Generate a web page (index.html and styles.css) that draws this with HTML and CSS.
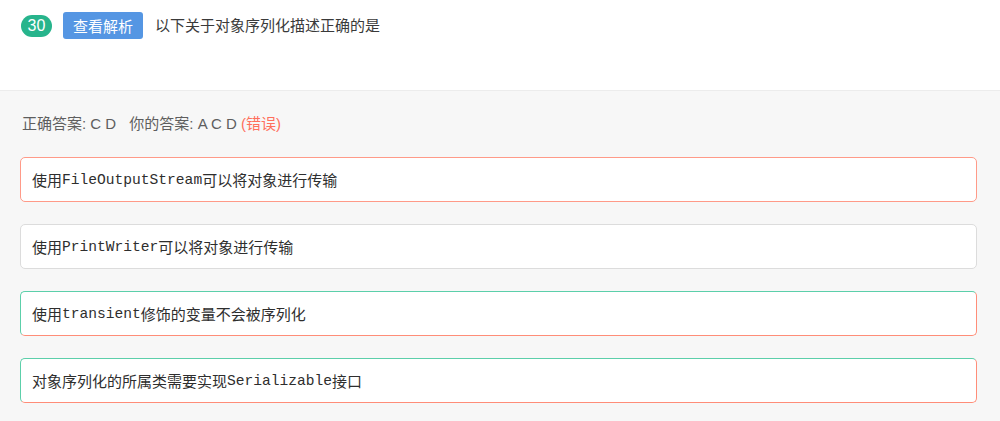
FILE: index.html
```html
<!DOCTYPE html>
<html lang="zh-CN">
<head>
<meta charset="utf-8">
<title>Quiz</title>
<link rel="stylesheet" href="styles.css">
</head>
<body>
<div class="head">
  <span class="num">30</span>
  <span class="btn">查看解析</span>
  <span class="question">以下关于对象序列化描述正确的是</span>
</div>
<div class="body">
  <div class="answer">
    <span>正确答案: C D</span>
    <span class="mine">你的答案: A C D <span class="wrong">(错误)</span></span>
  </div>
  <div class="opt opt-wrong">使用<code>FileOutputStream</code>可以将对象进行传输</div>
  <div class="opt">使用<code>PrintWriter</code>可以将对象进行传输</div>
  <div class="opt opt-right">使用<code>transient</code>修饰的变量不会被序列化</div>
  <div class="opt opt-right">对象序列化的所属类需要实现<code>Serializable</code>接口</div>
</div>
</body>
</html>
```
FILE: styles.css
```css
html, body {
  margin: 0;
  padding: 0;
}
body {
  font-family: "Liberation Sans", "Noto Sans CJK SC", sans-serif;
  font-size: 15px;
  color: #2e2e2e;
  background: #f7f7f7;
  height: 421px;
  overflow: hidden;
}
.head {
  background: #fff;
  height: 91px;
  border-bottom: 1px solid #ececec;
  box-sizing: border-box;
  display: flex;
  align-items: flex-start;
  padding: 12px 20px 0 21px;
}
.num {
  margin-top: 3px;
  width: 31px;
  height: 22px;
  border-radius: 11px;
  background: #27b48c;
  color: #fff;
  display: flex;
  align-items: center;
  justify-content: center;
  font-size: 16px;
}
.btn {
  margin-left: 11px;
  width: 80px;
  height: 27px;
  border-radius: 3px;
  background: #5596e3;
  color: #fff;
  display: flex;
  align-items: center;
  justify-content: center;
  font-size: 15px;
}
.question {
  margin-left: 12px;
  line-height: 27px;
  color: #3a3a3a;
}
.body {
  padding: 0 23px 0 20px;
}
.answer {
  padding-top: 23px;
  line-height: 20px;
  color: #5e5e5e;
  padding-left: 2px;
  margin-bottom: 23px;
}
.mine {
  margin-left: 9px;
}
.wrong {
  color: #ff6f5c;
}
.opt {
  height: 45px;
  box-sizing: border-box;
  border: 1px solid #dcdcdc;
  border-radius: 5px;
  background: #fff;
  display: flex;
  align-items: center;
  padding-left: 11px;
  margin-bottom: 22px;
  color: #2e2e2e;
}
.opt-wrong {
  border-color: #ff9a88;
}
.opt-right {
  border-color: #5ccfaa #ff8d78 #ff8d78 #5ccfaa;
}
code {
  font-family: "Liberation Mono", monospace;
  font-size: 14.6px;
  color: #2e2e2e;
}
```
